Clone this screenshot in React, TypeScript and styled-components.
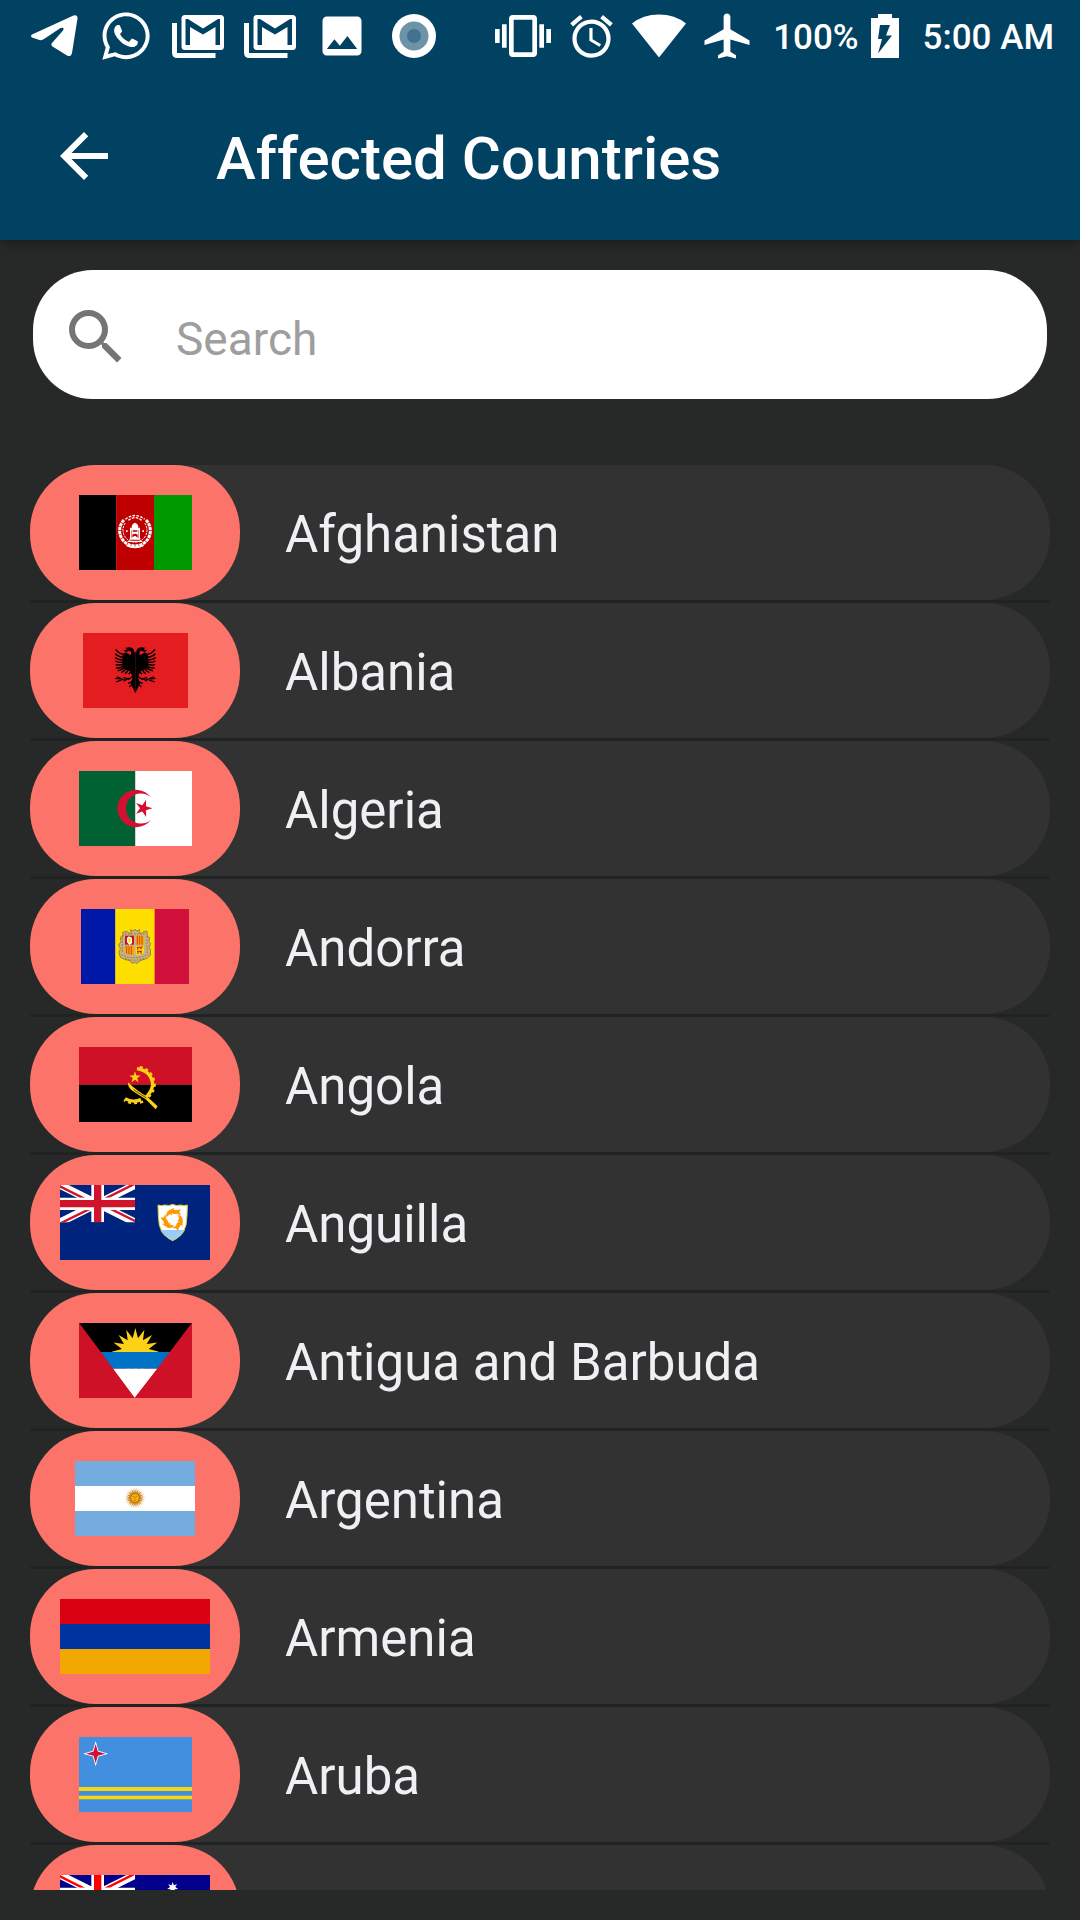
import React from 'react';
import styled, { createGlobalStyle } from 'styled-components';
import { FaWhatsapp } from 'react-icons/fa';
import {
  MdAirplanemodeActive,
  MdAlarm,
  MdArrowBack,
  MdImage,
  MdSearch,
  MdVibration,
} from 'react-icons/md';

const GlobalStyle = createGlobalStyle`
  * { box-sizing: border-box; }
  body {
    margin: 0;
    background: #272928;
    font-family: Roboto, "Noto Sans", sans-serif;
  }
`;

const Screen = styled.div`
  display: flex;
  flex-direction: column;
  height: 100vh;
  padding-bottom: 30px;
  background: #272928;
`;

const Header = styled.header`
  flex: none;
  background: #014162;
  color: #fff;
  box-shadow: 0 2px 12px rgba(0, 0, 0, 0.4);
`;

const StatusBar = styled.div`
  display: flex;
  justify-content: space-between;
  height: 72px;
  padding: 0 26px 0 18px;
`;

const StatusGroup = styled.div`
  display: flex;
  align-items: center;
`;

const StatusIcon = styled.span<{ $width: number }>`
  display: flex;
  align-items: center;
  justify-content: center;
  width: ${(p) => p.$width}px;
  height: 72px;

  svg {
    display: block;
    flex: none;
  }
`;

const StatusText = styled.span`
  padding: 4px 12px 0;
  font-size: 35px;
  font-weight: 500;
  line-height: 44px;
  white-space: nowrap;

  &:last-child {
    padding-right: 0;
    padding-left: 24px;
  }
`;

const Toolbar = styled.div`
  display: flex;
  align-items: center;
  gap: 96px;
  height: 168px;
  padding: 0 48px;
`;

const BackButton = styled.button`
  display: flex;
  padding: 0;
  border: 0;
  background: none;
  color: inherit;
  cursor: pointer;
`;

const Title = styled.h1`
  margin: 0;
  padding-top: 6px;
  font-size: 60px;
  font-weight: 500;
  line-height: 72px;
`;

const SearchBox = styled.label`
  display: flex;
  flex: none;
  align-items: center;
  gap: 44px;
  height: 129px;
  margin: 30px 33px 66px;
  padding: 4px 27px 0;
  border-radius: 60px;
  background: #fff;
  color: #757575;

  svg {
    flex: none;
  }
`;

const SearchInput = styled.input`
  flex: 1;
  min-width: 0;
  padding: 4px 0 0;
  border: 0;
  outline: 0;
  background: none;
  color: #323232;
  font: 400 46px/56px Roboto, "Noto Sans", sans-serif;

  &::placeholder {
    color: #9e9e9e;
    opacity: 1;
  }
`;

const CountryList = styled.ul`
  flex: 1;
  min-height: 0;
  margin: 0 30px;
  padding: 0;
  overflow-y: auto;
  list-style: none;
  scrollbar-width: none;
`;

const CountryItem = styled.li`
  border-bottom: 3px solid #212322;
`;

const CountryLink = styled.a`
  display: flex;
  align-items: center;
  gap: 45px;
  height: 135px;
  border-radius: 66px;
  background: #323232;
  color: #f0eff4;
  text-decoration: none;
`;

const FlagPill = styled.span`
  display: flex;
  flex: none;
  align-items: center;
  justify-content: center;
  width: 210px;
  height: 135px;
  border-radius: 66px;
  background: #fc7469;
`;

const FlagSvg = styled.svg`
  display: block;
  height: 75px;
`;

const CountryName = styled.span`
  padding-top: 4px;
  font-size: 51px;
  line-height: 60px;
`;

function star(cx: number, cy: number, outer: number, inner: number, points: number, turn = 0) {
  return Array.from({ length: points * 2 }, (_, i) => {
    const r = i % 2 ? inner : outer;
    const a = (Math.PI * i) / points - Math.PI / 2 + (turn * Math.PI) / 180;
    return `${(cx + r * Math.cos(a)).toFixed(1)},${(cy + r * Math.sin(a)).toFixed(1)}`;
  }).join(' ');
}

function PaperPlane() {
  return (
    <svg width="47" height="42" viewBox="0 0 47 42" aria-hidden="true">
      <path
        fill="#fff"
        d="M1 19.500L42.500.500Q47-1 46.500 3.500L41 38Q40 42.500 36 40.500L21.500 31.500Q19.500 30 21 28L32 15.500Q34 12 29.500 13L13 24Q11 25.500 8.500 25L1 22.500Q-1 21 1 19.500Z"
      />
    </svg>
  );
}

function GmailStack() {
  return (
    <svg width="52" height="44" viewBox="0 0 52 44" aria-hidden="true">
      <path d="M2.500 9V38.500Q2.500 41.500 5.500 41.500H43.500" fill="none" stroke="#fff" strokeWidth="5" />
      <path
        fillRule="evenodd"
        fill="#fff"
        d="M13 1H48.500Q52 1 52 4.500V32.500Q52 36 48.500 36H13Q9.500 36 9.500 32.500V4.500Q9.500 1 13 1ZM13.500 5V31H18V13L31 20.500L43.500 13V31H48V5H46L31 14.500L16 5Z"
      />
    </svg>
  );
}

function RecordDot() {
  return (
    <svg width="44" height="44" viewBox="0 0 44 44" aria-hidden="true">
      <circle cx="22" cy="22" r="22" fill="#fff" />
      <circle cx="22" cy="22" r="14.500" fill="#6c93a8" />
      <circle cx="22" cy="22" r="7" fill="#437190" />
    </svg>
  );
}

function WifiFan() {
  return (
    <svg width="54" height="44" viewBox="0 0 54 44" aria-hidden="true">
      <path fill="#fff" d="M0 9.500Q11 .5 27 .5T54 9.500L27 43.500Z" />
    </svg>
  );
}

function BatteryCharging() {
  return (
    <svg width="28" height="44" viewBox="0 0 28 44" aria-hidden="true">
      <path fill="#fff" d="M7 0H21V4H28V44H0V4H7Z" />
      <path fill="#014162" d="M9 11H19L15 21.500H21L7 39.500L11 25H7Z" />
    </svg>
  );
}

function UnionJack({ red, blue }: { red: string; blue: string }) {
  return (
    <svg width="225" height="112" viewBox="0 0 225 112">
      <path fill={blue} d="M0 0H225V112H0Z" />
      <path stroke="#fff" strokeWidth="23" d="M0 0L225 112M225 0L0 112" />
      <path fill={red} d="M0 0V8L60 38H76ZM225 0H209L133 38H149ZM225 112V104L165 74H149ZM0 112H16L92 74H76Z" />
      <path fill="#fff" d="M94 0H132V38H225V75H132V112H94V75H0V38H94Z" />
      <path fill={red} d="M102 0H124V45H225V67H124V112H102V67H0V45H102Z" />
    </svg>
  );
}

function Afghanistan() {
  return (
    <>
      <path fill="#000" d="M0 0H112V225H0Z" />
      <path fill="#bf0000" d="M112 0H225V225H112Z" />
      <path fill="#090" d="M225 0H339V225H225Z" />
      <g fill="none" stroke="#fff">
        <path strokeWidth="9" strokeDasharray="10 2" d="M135 75A46 46 0 1 0 201 75" />
        <path strokeWidth="3" strokeDasharray="7 3" d="M139 84A36 36 0 1 0 197 84" />
        <path strokeWidth="4" strokeDasharray="8 4" d="M139 73Q168 50 197 73M148 76Q168 60 188 76" />
        <path strokeWidth="4" d="M146 139H190M152 132H184M155 132V98M181 132V98M142 151Q168 164 194 151" />
      </g>
      <path fill="#fff" d="M158 98Q158 86 168 83Q178 86 178 98L183 106H178V132H158V106H153Z" />
      <path fill="#bf0000" d="M161 106H175V110H161ZM160 119Q168 113 176 119V128L168 122L160 127Z" />
      <path fill="#fff" d="M141 106H146V111H141ZM190 106H195V111H190Z" />
    </>
  );
}

function EagleHalf() {
  return (
    <>
      <path d="M0 56L8 62Q12 68 20 64L28 58Q36 60 38 66L39 96L31 108L16 114L8 132L14 152L6 168L0 181Z" />
      <path d="M3 58Q3 45 17 43L30 44Q24 47 27 52L36 50L29 57L17 53Q10 55 13 66L3 68Z" />
      <g fill="none" stroke="#000" strokeWidth="4.500">
        <path d="M30 66Q50 62 59 49M35 73Q52 71 60 62M35 81Q52 81 61 74M35 87Q52 90 60 84M34 93Q50 99 59 94M32 98Q47 107 58 105M29 101Q41 112 53 113M25 103Q32 114 42 119M18 106Q23 116 31 122M10 109Q14 118 20 124" />
        <path strokeWidth="3.500" d="M5 128L20 139L35 133M20 135L35 145M32 139L60 136M39 140L58 147M44 136L56 131M8 151L18 162M6 145L22 151" />
      </g>
    </>
  );
}

function Albania() {
  return (
    <>
      <path fill="#e41e20" d="M0 0H315V225H0Z" />
      <g transform="translate(157 0)">
        <EagleHalf />
      </g>
      <g transform="translate(157 0) scale(-1 1)">
        <EagleHalf />
      </g>
    </>
  );
}

function Algeria() {
  return (
    <>
      <path fill="#006233" d="M0 0H169V225H0Z" />
      <path fill="#fff" d="M169 0H339V225H169Z" />
      <path fill="#d21034" d="M216 79A56 56 0 1 0 216 146A45 45 0 1 1 216 79Z" />
      <polygon fill="#d21034" points={star(193, 112, 27, 10, 5, 90)} />
    </>
  );
}

function Andorra() {
  return (
    <>
      <path fill="#0018a8" d="M0 0H103V225H0Z" />
      <path fill="#fedf00" d="M103 0H221V225H103Z" />
      <path fill="#d0103a" d="M221 0H324V225H221Z" />
      <path
        fill="#c7b37f"
        stroke="#9b8049"
        strokeWidth="3"
        d="M148 62L156 66L162 61L168 66L176 62L174 72L183 73L188 67H198L199 82L206 86L204 98L209 104L204 114L208 122V138L199 148L186 152L176 156L168 163L161 160L153 163L147 155L130 151L118 145L114 130L118 119L113 108L120 98L118 85L127 81L125 70L137 67L145 73L151 72Z"
      />
      <path fill="none" stroke="#8d7442" strokeWidth="3" strokeDasharray="5 4" d="M121 137Q160 156 202 136M124 78V132M198 82V132M132 75H193M132 148Q160 160 192 147" />
      <path fill="#c7102e" d="M132 80H159V107H132Z" />
      <path fill="#fedf00" stroke="#fff" strokeWidth="4" d="M144 84L151 88V101L146 105L140 99V88Z" />
      <path fill="#f7a800" d="M164 80H189V107H164ZM132 111H159V138L145 136L132 133Z" />
      <path fill="#fedf00" d="M164 111H189V131L178 137H164Z" />
      <path stroke="#d8451b" strokeWidth="3" d="M169 80V107M176 80V107M183 80V107M137 111V134M144 111V136M151 111V137" />
      <path fill="none" stroke="#d52b1e" strokeWidth="4" d="M167 115H181L185 113M170 116V122M180 116V121M168 127H183M171 128V134M180 128V134" />
    </>
  );
}

function Angola() {
  return (
    <>
      <path fill="#ce1126" d="M0 0H339V113H0Z" />
      <path fill="#000" d="M0 113H339V225H0Z" />
      <path fill="none" stroke="#fcd116" strokeWidth="10" d="M174 65Q217 72 221 112Q220 132 200 152M186 158Q161 168 138 155" />
      <path fill="none" stroke="#fcd116" strokeWidth="7" strokeDasharray="9 9" d="M182 60Q225 70 227 115Q224 137 207 151M192 164Q162 174 135 160" />
      <polygon fill="#fcd116" points={star(168, 91, 18, 7, 5)} />
      <path fill="#fcd116" d="M147 106Q146 122 160 131L200 157L230 187L236 178L205 149Q176 134 147 106Z" />
      <path fill="none" stroke="#000" strokeWidth="2" d="M164 128L202 153" />
    </>
  );
}

function Dolphin() {
  return (
    <path d="M-20-6Q-22-24-8-29L4-35L2-29Q12-27 23-30L19-21L25-12L12-17Q2-14-4-18L-3-11L-9-16Q-13-12-20-6Z" />
  );
}

function Anguilla() {
  return (
    <>
      <path fill="#00247d" d="M0 0H450V225H0Z" />
      <UnionJack red="#cf142b" blue="#00247d" />
      <path fill="#fff" d="M294 60Q304 64 314 60Q327 64 338 58Q349 64 362 60Q372 64 382 60Q382 94 378 121Q369 152 338 167Q307 152 298 121Q294 94 294 60Z" />
      <path fill="#9cf" d="M301 135H375Q365 156 338 167Q311 156 301 135Z" />
      <path fill="none" stroke="#d5d33a" strokeWidth="3" d="M294 60Q304 64 314 60Q327 64 338 58Q349 64 362 60Q372 64 382 60Q382 94 378 121Q369 152 338 167Q307 152 298 121Q294 94 294 60Z" />
      <g fill="#ff9900" transform="translate(339 103)">
        <Dolphin />
        <g transform="rotate(120)">
          <Dolphin />
        </g>
        <g transform="rotate(240)">
          <Dolphin />
        </g>
      </g>
    </>
  );
}

function Antigua() {
  return (
    <>
      <path fill="#ce1126" d="M0 0H339V225H0Z" />
      <path fill="#000" d="M0 0H339L273 87H65Z" />
      <polygon fill="#fcd116" points={star(169, 86, 71, 41, 16)} />
      <path fill="#0072c6" d="M65 87H273L235 137H102Z" />
      <path fill="#fff" d="M102 137H235L167 225Z" />
      <path fill="#ce1126" d="M0 0L102 137L167 225H0ZM339 0L235 137L167 225H339Z" />
    </>
  );
}

function Argentina() {
  return (
    <>
      <path fill="#74acdf" d="M0 0H360V225H0Z" />
      <path fill="#fff" d="M0 75H360V150H0Z" />
      <polygon fill="#e3b878" points={star(180, 111, 32, 18, 32)} />
      <polygon fill="#ca8520" points={star(180, 111, 26, 15, 16)} />
      <circle cx="180" cy="111" r="13" fill="#f6b40e" stroke="#bd7410" strokeWidth="3" />
      <path fill="none" stroke="#a96510" strokeWidth="2" d="M173 107H178M182 107H187M180 108V113M176 117H184" />
    </>
  );
}

function Armenia() {
  return (
    <>
      <path fill="#d90012" d="M0 0H450V75H0Z" />
      <path fill="#0033a0" d="M0 75H450V150H0Z" />
      <path fill="#f2a800" d="M0 150H450V225H0Z" />
    </>
  );
}

function Aruba() {
  return (
    <>
      <path fill="#418fde" d="M0 0H339V225H0Z" />
      <path fill="#fbd60f" d="M0 150H339V162H0ZM0 176H339V187H0Z" />
      <polygon fill="#fff" points={star(50, 50, 38, 12, 4)} />
      <polygon fill="#d21034" points={star(50, 50, 29, 9, 4)} />
    </>
  );
}

function Australia() {
  return (
    <>
      <path fill="#00008b" d="M0 0H450V225H0Z" />
      <UnionJack red="#f00" blue="#00008b" />
      <g fill="#fff">
        <polygon points={star(338, 38, 17, 8, 7)} />
        <polygon points={star(338, 188, 17, 8, 7)} />
        <polygon points={star(281, 98, 17, 8, 7)} />
        <polygon points={star(388, 84, 17, 8, 7)} />
        <polygon points={star(112, 169, 34, 15, 7)} />
      </g>
    </>
  );
}

type Country = { name?: string; width: number; Flag: () => React.JSX.Element };

const countries: Country[] = [
  { name: 'Afghanistan', width: 113, Flag: Afghanistan },
  { name: 'Albania', width: 105, Flag: Albania },
  { name: 'Algeria', width: 113, Flag: Algeria },
  { name: 'Andorra', width: 108, Flag: Andorra },
  { name: 'Angola', width: 113, Flag: Angola },
  { name: 'Anguilla', width: 150, Flag: Anguilla },
  { name: 'Antigua and Barbuda', width: 113, Flag: Antigua },
  { name: 'Argentina', width: 120, Flag: Argentina },
  { name: 'Armenia', width: 150, Flag: Armenia },
  { name: 'Aruba', width: 113, Flag: Aruba },
  { width: 150, Flag: Australia },
];

export default function App() {
  return (
    <>
      <GlobalStyle />
      <Screen>
        <Header>
          <StatusBar>
            <StatusGroup>
              <StatusIcon $width={72}><PaperPlane /></StatusIcon>
              <StatusIcon $width={72}><FaWhatsapp size={54} /></StatusIcon>
              <StatusIcon $width={72}><GmailStack /></StatusIcon>
              <StatusIcon $width={72}><GmailStack /></StatusIcon>
              <StatusIcon $width={72}><MdImage size={52} /></StatusIcon>
              <StatusIcon $width={72}><RecordDot /></StatusIcon>
            </StatusGroup>
            <StatusGroup>
              <StatusIcon $width={68}><MdVibration size={56} /></StatusIcon>
              <StatusIcon $width={68}><MdAlarm size={51} /></StatusIcon>
              <StatusIcon $width={68}><WifiFan /></StatusIcon>
              <StatusIcon $width={68}><MdAirplanemodeActive size={54} /></StatusIcon>
              <StatusText>100%</StatusText>
              <StatusIcon $width={28}><BatteryCharging /></StatusIcon>
              <StatusText>5:00 AM</StatusText>
            </StatusGroup>
          </StatusBar>
          <Toolbar>
            <BackButton type="button" aria-label="Back">
              <MdArrowBack size={72} />
            </BackButton>
            <Title>Affected Countries</Title>
          </Toolbar>
        </Header>
        <SearchBox>
          <MdSearch size={72} aria-hidden="true" />
          <SearchInput type="text" placeholder="Search" aria-label="Search" />
        </SearchBox>
        <CountryList>
          {countries.map(({ name, width, Flag }) => (
            <CountryItem key={Flag.name}>
              <CountryLink href="#">
                <FlagPill>
                  <FlagSvg width={width} viewBox={`0 0 ${width * 3} 225`} aria-hidden="true">
                    <Flag />
                  </FlagSvg>
                </FlagPill>
                {name && <CountryName>{name}</CountryName>}
              </CountryLink>
            </CountryItem>
          ))}
        </CountryList>
      </Screen>
    </>
  );
}
